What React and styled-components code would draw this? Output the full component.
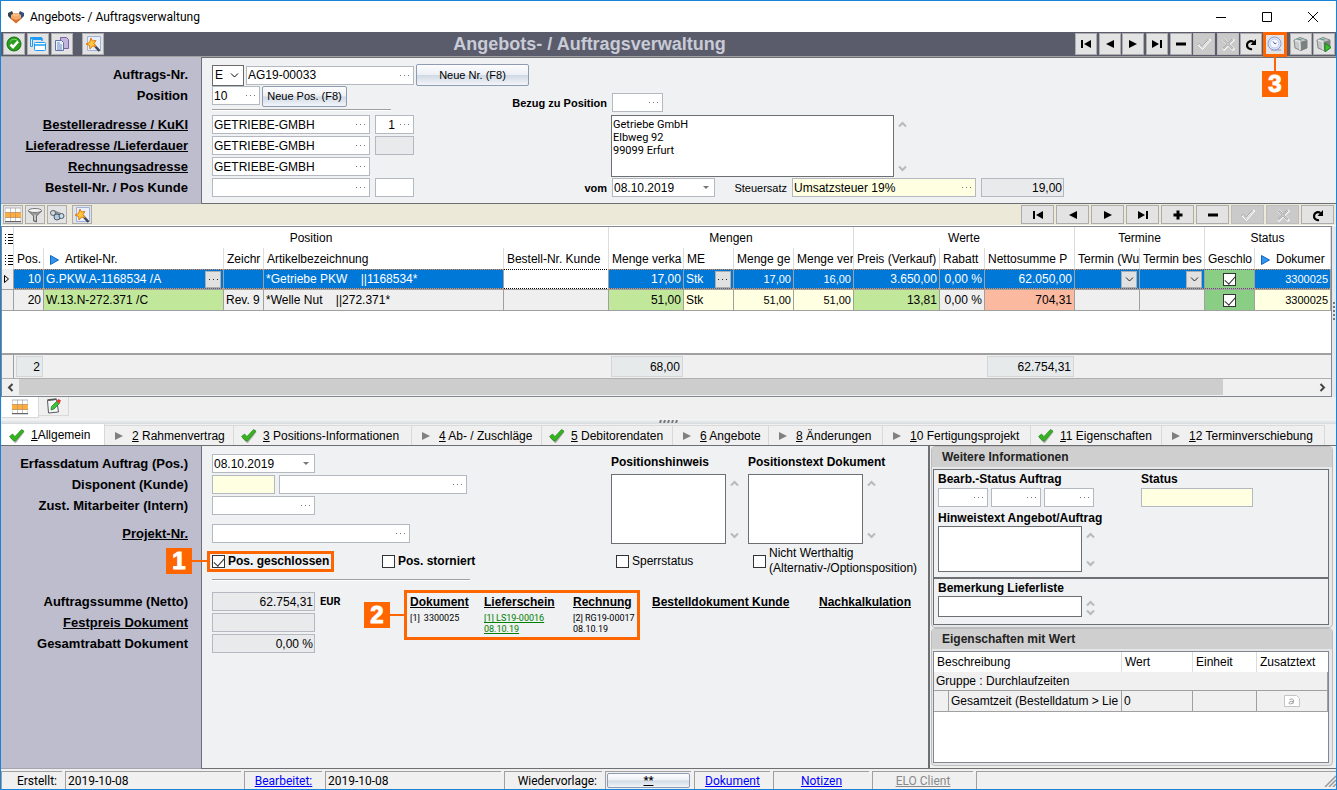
import React from "react";
import styled, { createGlobalStyle, css } from "styled-components";

const sans = `"Liberation Sans", Arial, sans-serif`;
const ui = `Roboto, "Segoe UI", sans-serif`;
const orange = "#ff6600";
const line = "#6e6f73";

const Global = createGlobalStyle`
  * { box-sizing: border-box; }
  body { margin: 0; background: #f0f0f0; font: 12px/15px ${sans}; color: #000; }
  button, input, select, textarea { font: inherit; color: inherit; margin: 0; border-radius: 0; }
  svg { display: block; flex: none; }
`;

/* ---------- window frame ---------- */
const Window = styled.div`
  min-height: 100vh;
  display: flex;
  flex-direction: column;
  border: 1px solid #1883d7;
  background: #f0f0f0;
`;
const TitleBar = styled.header`
  display: flex;
  align-items: center;
  height: 31px;
  padding-left: 7px;
  background: #fff;
  font: 12px/16px ${ui};
`;
const WindowTitle = styled.span`
  flex: 1;
  padding-left: 6px;
`;
const WindowButton = styled.button`
  width: 46px;
  height: 29px;
  display: flex;
  align-items: center;
  justify-content: center;
  padding: 0;
  border: 0;
  background: none;
`;

/* ---------- toolbars ---------- */
const Toolbar = styled.div`
  display: flex;
  align-items: center;
  height: 25px;
  padding: 0 1px 1px 2px;
  background: #5a5c6c;
  border-bottom: 1px solid #a0a0a0;
`;
const GridToolbar = styled.div`
  display: flex;
  justify-content: space-between;
  align-items: center;
  height: 22px;
  padding: 0 2px;
  background: #ece9d8;
  border-bottom: 1px solid #fff;
`;
const ToolGroup = styled.div`
  display: flex;
  gap: ${(p) => p.$gap || 2}px;
  ${(p) => p.$width && `width: ${p.$width}px; justify-content: space-between; gap: 0;`}
  margin-left: ${(p) => p.$push || 0}px;
`;
const ToolButton = styled.button`
  position: relative;
  display: flex;
  align-items: center;
  justify-content: center;
  width: ${(p) => p.$w || 22}px;
  height: ${(p) => p.$h || 22}px;
  padding: 0;
  color: #000;
  background: ${(p) => (p.disabled ? "#cacaca" : "#e3e3e3")};
  border: 1px solid ${(p) => (p.disabled ? "#bdbdbd" : "#adadad")};
`;
const ToolbarTitle = styled.h1`
  flex: 1;
  margin: 0;
  text-align: center;
  font-size: 18px;
  line-height: 22px;
  color: #c9cbd6;
`;

/* ---------- callouts ---------- */
const frame = css`
  position: absolute;
  border: 3px solid ${orange};
  pointer-events: none;
`;
const CalloutBadge = styled.span`
  position: absolute;
  z-index: 2;
  width: 26px;
  height: 26px;
  background: ${orange};
  color: #fff;
  font: bold 24px/26px ${sans};
  -webkit-text-stroke: 1px #fff;
  text-align: center;
  ${(p) =>
    p.$below
      ? css`top: calc(100% + 17px); left: calc(50% - 13px);`
      : css`right: calc(100% + ${p.$gap}px); top: calc(50% - 13px);`}
  &::after {
    content: "";
    position: absolute;
    background: ${orange};
    ${(p) =>
      p.$below
        ? css`width: 2px; height: 16px; left: 12px; bottom: 100%;`
        : css`height: 2px; width: 16px; top: 12px; left: 100%;`}
  }
`;
const ToolHighlight = styled.span`
  ${frame}
  inset: -2px -2px -3px;
`;

/* ---------- form parts ---------- */
const Pane = styled.section`
  display: flex;
  ${(p) => p.$grow && "flex: 1;"}
`;
const LabelColumn = styled.div`
  flex: none;
  width: 200px;
  display: flex;
  flex-direction: column;
  align-items: flex-end;
  gap: 2px;
  padding: ${(p) => p.$top}px 13px 5px 0;
  background: #bdbdce;
  border-bottom: 1px solid #a4a5b0;
`;
const RowLabel = styled.label`
  height: 19px;
  margin-top: ${(p) => p.$space || 0}px;
  font: bold 13px/19px ${sans};
  white-space: nowrap;
  text-decoration: ${(p) => (p.$link ? "underline" : "none")};
`;
const PaneBody = styled.div`
  flex: 1;
  min-width: 0;
  padding: ${(p) => p.$top}px 0 6px 10px;
  background: #eff1f3;
  border-left: 1px solid ${line};
  border-bottom: 1px solid ${line};
  ${(p) => p.$topLine && `border-top: 1px solid ${line};`}
`;
const Line = styled.div`
  display: flex;
  align-items: ${(p) => p.$align || "center"};
  gap: ${(p) => p.$gap || 0}px;
  margin-top: ${(p) => p.$space || 0}px;
`;
const Stack = styled.div`
  display: flex;
  flex-direction: column;
  gap: ${(p) => (p.$gap === undefined ? 2 : p.$gap)}px;
  ${(p) => p.$width && `width: ${p.$width}px; flex: none;`}
  padding-top: ${(p) => p.$top || 0}px;
`;
const Box = styled.span`
  display: flex;
  flex: none;
  align-items: center;
  width: ${(p) => p.$w}px;
  height: 19px;
  border: 1px solid #b4b8c1;
  background: ${(p) => (p.$tone === "yellow" ? "#ffffe1" : p.$tone === "grey" ? "#e9eaec" : "#fff")};
`;
const TextInput = styled.input`
  flex: 1;
  min-width: 0;
  width: 100%;
  height: 17px;
  padding: 0 1px;
  border: 0;
  outline: 0;
  background: transparent;
  text-align: ${(p) => (p.$right ? "right" : "left")};
`;
const MoreButton = styled.button`
  display: flex;
  align-items: center;
  justify-content: center;
  width: 17px;
  height: 17px;
  flex: none;
  padding: 0;
  border: 0;
  background: none;
  color: #777;
`;
const PushButton = styled.button`
  flex: none;
  width: ${(p) => p.$w}px;
  height: ${(p) => p.$h || 21}px;
  padding: 0;
  font-size: 11px;
  line-height: 13px;
  white-space: nowrap;
  border: 1px solid #8e9bb0;
  border-radius: 2px;
  background: linear-gradient(#fdfdfe, #eceff4 48%, #d0d9e4 52%, #f2f5f9);
  ${(p) => p.$underline && "text-decoration: underline; font-weight: bold;"}
`;
const Combo = styled.span`
  position: relative;
  display: flex;
  align-items: center;
  width: 32px;
  height: 21px;
  border: 1px solid #6b6b6b;
  background: #fff;
  svg { position: absolute; right: 3px; pointer-events: none; }
`;
const Select = styled.select`
  appearance: none;
  width: 100%;
  height: 19px;
  padding: 0 2px;
  border: 0;
  outline: 0;
  background: transparent;
`;
const Rule = styled.hr`
  width: ${(p) => p.$w}px;
  height: 2px;
  margin: ${(p) => p.$m};
  border: 0;
  border-top: 1px solid #a0a0a0;
  background: #fff;
`;
const SmallLabel = styled.label`
  height: 16px;
  font: bold 12px/16px ${sans};
  white-space: nowrap;
`;
const SideLabel = styled.label`
  width: ${(p) => p.$w}px;
  flex: none;
  padding-right: 5px;
  text-align: right;
  font: ${(p) => (p.$plain ? "normal" : "bold")} 11px/16px ${sans};
  white-space: nowrap;
`;
const MemoWrap = styled.div`
  display: flex;
  height: ${(p) => p.$h}px;
`;
const MemoArea = styled.textarea`
  width: ${(p) => p.$w}px;
  height: 100%;
  padding: 2px 1px 1px;
  border: 1px solid ${line};
  outline: 0;
  resize: none;
  overflow: hidden;
  background: #fff;
  font: 11px/13px ${ui};
`;
const MemoArrows = styled.div`
  display: flex;
  flex-direction: column;
  justify-content: space-between;
  padding: ${(p) => (p.$tight ? 3 : 5)}px 4px ${(p) => (p.$tight ? 0 : 4)}px;
  color: #b9b9b9;
`;
const CheckLabel = styled.label`
  position: relative;
  display: flex;
  justify-self: start;
  align-items: center;
  gap: 3px;
  min-height: 15px;
  white-space: nowrap;
  font-weight: ${(p) => (p.$bold ? "bold" : "normal")};
`;
const CheckFrame = styled.span`
  ${frame}
  inset: -3px -5px;
`;
const Check = styled.input`
  appearance: none;
  flex: none;
  position: relative;
  width: 13px;
  height: 13px;
  border: 1px solid #333;
  background: #fff;
  &:checked::after {
    content: "";
    position: absolute;
    left: 3px;
    top: 0;
    width: 5px;
    height: 9px;
    border: solid #333;
    border-width: 0 1px 1px 0;
    transform: rotate(42deg);
  }
`;
const CheckRow = styled.div`
  display: grid;
  grid-template-columns: 170px 234px 137px auto;
  align-items: center;
  height: 34px;
`;
const Unit = styled.b`
  font: bold 11px/16px ${ui};
  padding-left: 5px;
`;

/* ---------- documents ---------- */
const DocFrame = styled.div`
  position: relative;
  display: grid;
  grid-template-columns: 74px 89px auto;
  width: 236px;
  height: 50px;
  padding: 1px 0 0 3px;
  border: 3px solid ${orange};
`;
const DocCell = styled.div`
  font: 9px/11px ${ui};
  white-space: nowrap;
  ${(p) => p.$w && `width: ${p.$w}px;`}
  padding-top: ${(p) => p.$top || 0}px;
`;
const DocHead = styled.a`
  display: block;
  margin-bottom: 3px;
  font: bold 12px/16px ${sans};
  color: #000;
`;
const DocLink = styled.a`
  color: #008000;
`;
const DocNo = styled.span`
  padding-left: 4px;
`;

/* ---------- position grid ---------- */
const GridArea = styled.div`
  display: flex;
`;
const GridFrame = styled.div`
  flex: 1;
  min-width: 0;
  border: 1px solid #828790;
  background: #fff;
`;
const SideGrip = styled.div`
  width: 4px;
  display: flex;
  align-items: center;
  background: #e6e9ec;
  color: #777;
`;
const Table = styled.table`
  width: 100%;
  table-layout: fixed;
  border-collapse: separate;
  border-spacing: 0;
`;
const Th = styled.th`
  height: 21px;
  padding: 2px 0 0 ${(p) => (p.$center ? 0 : 3)}px;
  overflow: hidden;
  white-space: nowrap;
  font-weight: normal;
  text-align: ${(p) => (p.$center ? "center" : "left")};
  border-right: 1px solid #dcdcdc;
  svg { display: inline-block; vertical-align: middle; }
`;
const ArrowLabel = styled.span`
  display: flex;
  align-items: center;
  gap: 6px;
  padding-left: 3px;
`;
const toneOf = { sel: "#0078d7", green: "#c0e79a", ok: "#8ace85", yellow: "#ffffe1", red: "#fbb9a0", white: "#fff", grey: "#efefef" };
const dots = (c) => `repeating-linear-gradient(90deg, ${c} 0 1px, transparent 1px 2px)`;
const Td = styled.td`
  height: 21px;
  padding: 0 2px;
  overflow: hidden;
  white-space: pre;
  text-align: ${(p) => (p.$right ? "right" : "left")};
  font-size: ${(p) => (p.$small ? 11 : 12)}px;
  color: ${(p) => (p.$tone === "sel" ? "#fff" : "#000")};
  border-right: 1px solid #a0a0a0;
  border-bottom: 1px solid #a0a0a0;
  background-color: ${(p) => toneOf[p.$tone || "grey"]};
  ${(p) =>
    p.$dots &&
    css`
      background-image: ${dots(p.$dots)}, ${dots(p.$dots)};
      background-size: 100% 1px;
      background-position: top, bottom;
      background-repeat: no-repeat;
    `}
`;
const CellSplit = styled.span`
  display: flex;
  align-items: center;
  justify-content: ${(p) => p.$justify || "space-between"};
`;
const CellButton = styled.button`
  width: 16px;
  height: 17px;
  display: flex;
  align-items: center;
  justify-content: center;
  padding: 0;
  color: #222;
  background: #e1e1e1;
  border: 1px solid #adadad;
`;
const FillCell = styled.td`
  height: 44px;
  padding: 0;
  border-bottom: 2px solid #a0a0a0;
`;
const SumCell = styled.td`
  height: 24px;
  padding: 1px 1px 1px 2px;
  background: #f0f0f0;
  border-bottom: 1px solid #b0b0b0;
  ${(p) => p.$edge && "border-right: 1px solid #a0a0a0;"}
`;
const Sum = styled.output`
  display: block;
  height: 21px;
  padding-right: 2px;
  line-height: 20px;
  text-align: right;
  background: #e6eaeb;
  border: 1px solid #d3d6d7;
`;
const HScroll = styled.div`
  display: flex;
  align-items: stretch;
  height: 17px;
  background: #f0f0f0;
  color: #444;
`;
const ScrollArrow = styled.span`
  width: 17px;
  display: flex;
  align-items: center;
  justify-content: center;
`;
const Thumb = styled.span`
  flex: 1204;
  margin-bottom: 1px;
  background: #cdcdcd;
`;
const ThumbRest = styled.span`
  flex: 91;
`;
const ViewTabs = styled.div`
  display: flex;
  height: 22px;
  padding-left: 1px;
`;
const ViewTab = styled.button`
  display: flex;
  align-items: center;
  justify-content: center;
  width: ${(p) => (p.$active ? 37 : 30)}px;
  height: ${(p) => (p.$active ? 21 : 19)}px;
  padding: 0;
  border: solid #d9d9d9;
  border-width: 0 1px 1px 0;
  background: ${(p) => (p.$active ? "#fff" : "#f0f0f0")};
`;
const Splitter = styled.div`
  display: flex;
  justify-content: center;
  height: 5px;
  padding-top: 1px;
  color: #777;
  background: linear-gradient(#f5f6f7, #d5dade);
`;

/* ---------- page tabs ---------- */
const Tabs = styled.nav`
  display: flex;
  align-items: flex-end;
  height: 22px;
  padding-left: 1px;
  border-bottom: 1px solid ${line};
`;
const Tab = styled.button`
  display: flex;
  align-items: center;
  flex: 0 1 ${(p) => p.$w}px;
  min-width: 0;
  gap: 6px;
  height: ${(p) => (p.$active ? 22 : 20)}px;
  padding: ${(p) => (p.$active ? 2 : 1)}px 0 0 7px;
  white-space: nowrap;
  border: solid #d9d9d9;
  border-width: 1px 1px 0 0;
  background: ${(p) => (p.$active ? "#fff" : "#f0f0f0")};
`;
const TabMark = styled.span`
  width: ${(p) => (p.$wide ? 16 : 14)}px;
  display: flex;
  justify-content: center;
`;

/* ---------- right side ---------- */
const Side = styled.aside`
  flex: none;
  width: 408px;
  display: flex;
  flex-direction: column;
  padding: 0 3px 2px 1px;
  background: #f0f0f0;
  border-left: 2px solid ${line};
  border-bottom: 1px solid ${line};
`;
const Group = styled.section`
  display: flex;
  flex-direction: column;
  ${(p) => p.$grow && "flex: 1;"}
  padding-bottom: 2px;
  border: 1px solid #bdbdbd;
  border-radius: 4px;
  background: #e6e7e8;
`;
const GroupTitle = styled.h2`
  height: 20px;
  margin: 0 0 2px;
  padding-left: 10px;
  font: bold 12px/20px ${sans};
  color: #222;
  background: #cfcfcf;
  border-radius: 3px 3px 0 0;
`;
const Panel = styled.div`
  margin: 0 3px 0 1px;
  height: ${(p) => p.$h}px;
  padding: 1px 4px;
  background: #eff1f3;
  border: 1px solid ${line};
`;
const StatusGrid = styled.div`
  display: grid;
  grid-template-columns: 203px 112px;
  row-gap: 1px;
  margin-bottom: 3px;
`;
const PropFrame = styled.div`
  flex: 1;
  margin: 0 3px 0 1px;
  background: #fff;
  border: 1px solid #828790;
`;
const PropTh = styled.th`
  height: 20px;
  padding: 0 0 0 3px;
  text-align: left;
  font-weight: normal;
  border-right: 1px solid #dcdcdc;
  &:last-child { border-right: 0; }
`;
const PropTd = styled.td`
  height: ${(p) => (p.$group ? 19 : 21)}px;
  padding: 0 2px;
  overflow: hidden;
  white-space: nowrap;
  background: #f0f0f0;
  border: solid #a0a0a0;
  border-width: 0 1px 1px 0;
`;

/* ---------- status bar ---------- */
const StatusBar = styled.footer`
  display: flex;
  gap: 3px;
  height: 20px;
  padding-top: 2px;
  font: 12px/16px ${ui};
`;
const StatusCell = styled.div`
  ${(p) => (p.$w ? `flex: 0 0 ${p.$w}px;` : "flex: 1;")}
  display: flex;
  align-items: center;
  justify-content: ${(p) => p.$justify || "center"};
  padding: 0 ${(p) => p.$pad || 0}px;
  border: 1px solid #a0a0a0;
  border-width: 1px 0 0 1px;
`;
const StatusLink = styled.a`
  color: ${(p) => (p.$dim ? "#8a8a8a" : "#0000ff")};
`;

/* ---------- drawings ---------- */
const Svg = ({ w = 16, h, children, ...rest }) => (
  <svg width={w} height={h || w} viewBox={`0 0 ${w} ${h || w}`} fill="none" aria-hidden="true" {...rest}>{children}</svg>
);
const Handshake = () => (
  <Svg>
    <path d="M0 4l4-2 2 4-3 4-3-3z" fill="#34424f" /><path d="M16 4l-4-2-2 4 3 4 3-3z" fill="#2f4f80" />
    <path d="M3 6l3-2h4l3 2v4l-5 4-5-4z" fill="#f6ab6c" /><path d="M3 9l5 2 5-2v1l-5 4.500L3 10z" fill="#d8702a" />
    <path d="M5 5.500l3 1 3-1" stroke="#ffd0a0" />
  </Svg>
);
const OkIcon = () => (
  <Svg><circle cx="8" cy="8" r="7" fill="#2a9c1d" stroke="#15700f" /><path d="M4 5.500A5 5 0 0 1 12 5" stroke="#7fd66e" /><path d="M4.500 8.500l2.500 2.500 5-5.500" stroke="#fff" strokeWidth="2.600" /></Svg>
);
const WindowsIcon = () => (
  <Svg><path d="M.5 1.500h11v2h-9v7h-2z" fill="#e6f2fb" stroke="#1e9bf5" /><path d="M1 2.500h11M12 2v3" stroke="#1e9bf5" strokeWidth="1.500" /><rect x="4.500" y="6.500" width="11" height="8" rx="1" fill="#fff" stroke="#1e9bf5" /><path d="M5 9h10" stroke="#1e9bf5" strokeWidth="1.500" /></Svg>
);
const CopyIcon = () => (
  <Svg><path d="M6.500 1.500h6l2 2v9h-8z" fill="#c3b6dd" stroke="#7a62a6" /><path d="M1.500 4.500h6l2 2v8h-8z" fill="#eef2fb" stroke="#5f74a8" /><path d="M3 7h3M3 9h5M3 11h5M3 13h5" stroke="#6f88bd" /></Svg>
);
const WandIcon = () => (
  <Svg><path d="M2.500.5h13v14h-13z" fill="#e8effc" stroke="#a0b2d8" /><path d="M9 9l5.500 6" stroke="#3c4658" strokeWidth="2.500" /><path d="M6 2l1.500 3L11 4.500 9 7.500l2 3-3.500-.5L5 13l-.5-3.500L1 8l3.500-1.500z" fill="#ffc83c" stroke="#e07c14" /></Svg>
);
const FirstIcon = () => <Svg><path d="M4 4v8" stroke="#000" strokeWidth="2" /><path d="M13 4v8L6 8z" fill="#000" /></Svg>;
const PrevIcon = () => <Svg><path d="M12 4v8L4 8z" fill="#000" /></Svg>;
const NextIcon = () => <Svg><path d="M4 4v8l8-4z" fill="#000" /></Svg>;
const LastIcon = () => <Svg><path d="M12 4v8" stroke="#000" strokeWidth="2" /><path d="M3 4v8l7-4z" fill="#000" /></Svg>;
const MinusIcon = () => <Svg><path d="M3 8h10" stroke="#000" strokeWidth="3" /></Svg>;
const PlusIcon = () => <Svg><path d="M3.500 8h9M8 3.500v9" stroke="#000" strokeWidth="3" /></Svg>;
const TickIcon = () => <Svg><path d="M2 9l2-1 2.500 3L13 3l2 1-8.500 9.500z" fill="#d4d4d4" stroke="#fff" /><path d="M1.500 8.500l2-1 2.500 3L12.500 3" stroke="#a2a2a2" /></Svg>;
const CrossIcon = () => <Svg><path d="M3 3l11 11M14 3L3 14" stroke="#fff" strokeWidth="3" /><path d="M3 3l10 10M13 3L3 13" stroke="#a8a8a8" strokeWidth="2" /><path d="M3 3l10 10M13 3L3 13" stroke="#cacaca" strokeWidth="1" /></Svg>;
const RefreshIcon = () => <Svg><path d="M9 13A4 4 0 1 1 10.500 6" stroke="#000" strokeWidth="2.200" /><path d="M13 3v6H7.500z" fill="#000" /></Svg>;
const ClockIcon = () => <Svg><path d="M5 13h9v2H4z" fill="#b5bbd8" /><circle cx="7.500" cy="7.500" r="6.500" fill="#e4e9fb" stroke="#8c9ad4" /><circle cx="7.500" cy="7.500" r="4.500" fill="#f6f8ff" stroke="#bcc6ec" /><path d="M6 5.500l2 2.500 1.500-1" stroke="#5060a0" /></Svg>;
const CubeIcon = ({ play }) => (
  <Svg><path d="M1 4l6-2.500L14 4v8l-6 2.500L2 12z" fill="#c4c8c8" stroke="#858989" /><path d="M7 6l7-2v8l-6 2.500z" fill="#7b8080" /><path d="M2 4l5 2v8" stroke="#f4f4f4" /><path d="M4 3l5 1" stroke="#5aa08e" />
    {play && <path d="M9 7l6 4.500L9 16z" fill="#3cc02f" stroke="#1d7d18" />}</Svg>
);
const TableIcon = () => (
  <Svg><path d="M0 1h16v14H0z" fill="#fff" stroke="#b0b4ba" /><path d="M0 5h16v6H0z" fill="#ffae3d" /><path d="M5.500 1v14M10.500 1v14M0 5.500h16M0 10.500h16" stroke="#9b9489" strokeOpacity=".55" /><path d="M0 14.500h16" stroke="#666" /></Svg>
);
const FunnelIcon = () => <Svg><path d="M1.500 4L6.500 9v5l3 1V9l5-5z" fill="#9c9c9c" stroke="#6a6a6a" /><ellipse cx="8" cy="3.500" rx="6.500" ry="2" fill="#f4f4f4" stroke="#777" /><path d="M8 8v5" stroke="#eee" /></Svg>;
const BinocularIcon = () => <Svg><path d="M1 5l4-2 7 3 2 5-5 2z" fill="#8d959c" /><circle cx="4" cy="6" r="2.500" fill="#d5d9dc" stroke="#60686e" /><circle cx="8" cy="10" r="3" fill="#b4cde2" stroke="#4d5a66" /><circle cx="12.500" cy="9" r="2.500" fill="#c8dcec" stroke="#4d5a66" /></Svg>;
const NoteIcon = () => <Svg><path d="M1.500 2.500l9-1 2 12.500-10 1z" fill="#f7f8f8" stroke="#555c60" /><path d="M1.500 2l9-1" stroke="#555" strokeWidth="1.500" /><path d="M5 12l.5-3.500 5-5 3 2L8 11z" fill="#3fc03b" stroke="#187a1c" strokeWidth=".7" /><path d="M10.500 3l2-2 2.500 1.500-1.500 3z" fill="#e23b2e" /></Svg>;
const GreenTick = () => <Svg><path d="M1 9l3-2.500 2.500 2.500 6.500-7 2.500 1-8.500 11H6z" fill="#6d6d6d" fillOpacity=".5" transform="translate(0 1)" /><path d="M.5 8.500l3-2.500L6 8.500l6.500-7L15 3 6.500 13H5z" fill="#35b41f" stroke="#178011" strokeWidth=".6" /></Svg>;
const GreyArrow = () => <Svg w={8}><path d="M0 0v8l8-4z" fill="#808080" /></Svg>;
const BlueArrow = () => <Svg w={9} h={10}><path d="M.5.5v9l8-4.500z" fill="#2f95f0" stroke="#1465bd" /></Svg>;
const Chevron = ({ dir = "down", w = 9, sw = 1 }) => {
  const r = { down: 0, up: 180, left: 90, right: -90 }[dir];
  return <Svg w={w}><path d={`M${w / 2 - 3.5} ${w / 2 - 2}l3.500 3.500 3.500-3.500`} stroke="currentColor" strokeWidth={sw} transform={`rotate(${r} ${w / 2} ${w / 2})`} /></Svg>;
};
const Ellipsis = () => <Svg w={9} h={1}><path d="M0 0h1v1H0zM4 0h1v1H4zM8 0h1v1H8z" fill="currentColor" /></Svg>;
const DropArrow = () => <Svg w={6} h={3}><path d="M0 0h6L3 3z" fill="currentColor" /></Svg>;
const ListIcon = () => <Svg w={8} h={10}><path d="M0 .5h2M0 3.500h2M0 6.500h2M0 9.500h2" stroke="#000" strokeDasharray="1 1" /><path d="M3 .5h5M3 3.500h5M3 6.500h5M3 9.500h5" stroke="#000" /></Svg>;
const RowMarker = () => <Svg w={5} h={8}><path d="M.5.5v7l4-3.500z" stroke="#000" /></Svg>;
const SheetIcon = () => <Svg><path d="M.5 2.500h12l3 3v8H.5z" fill="#fff" stroke="#c4c4c4" /><path d="M5.500 6.500c2-1 4.500-.5 4 1.500l-.8 3M9.300 8.500c-3-.5-4.500.5-4.300 1.800.3 1.200 3 .8 3.800-.8" stroke="#9c9c9c" /></Svg>;
const DotRow = () => <Svg w={19} h={3}><path d="M1 3L2 0M5 3L6 0M9 3l1-3M13 3l1-3M17 3l1-3" stroke="currentColor" strokeWidth="2" /></Svg>;
const DotColumn = () => <Svg w={4} h={19}><path d="M1 1h2M1 5h2M1 9h2M1 13h2M1 17h2" stroke="currentColor" strokeWidth="2" /></Svg>;
const ResizeGrip = () => <Svg w={12}><path d="M1 12L12 1M5 12l7-7M9 12l3-3" stroke="#999" strokeWidth="1.500" /></Svg>;

/* ---------- composed controls ---------- */
const Field = ({ id, w, value = "", tone, right, more, drop, label }) => (
  <Box $w={w} $tone={tone}>
    <TextInput id={id} aria-label={label} defaultValue={value} $right={right} readOnly={tone === "grey"} />
    {more && <MoreButton aria-label="Auswahl"><Ellipsis /></MoreButton>}
    {drop && <MoreButton aria-label="Kalender"><DropArrow /></MoreButton>}
  </Box>
);
const Memo = ({ id, w, h, value = "", tight, label }) => (
  <MemoWrap $h={h}>
    <MemoArea id={id} $w={w} defaultValue={value} aria-label={label} />
    <MemoArrows $tight={tight}><Chevron dir="up" sw={2} /><Chevron sw={2} /></MemoArrows>
  </MemoWrap>
);
const Tool = ({ icon, label, ...rest }) => <ToolButton aria-label={label} {...rest}>{icon}</ToolButton>;

const colWidths = [12, 30, 180, 40, null, 105, 75, 50, 60, 60, 86, 45, 90, 65, 65, 50, 76];
const tabs = [
  ["1", "Allgemein", 103, true], ["2", " Rahmenvertrag", 129], ["3", " Positions-Informationen", 178, true],
  ["4", " Ab- / Zuschläge", 130], ["5", " Debitorendaten", 131, true], ["6", " Angebote", 96], ["8", " Änderungen", 114],
  ["1", "0 Fertigungsprojekt", 148], ["1", "1 Eigenschaften", 131, true], ["1", "2 Terminverschiebung", 163],
];
const mark = "#ff8c3c";

export default function App() {
  return (
    <Window>
      <Global />
      <TitleBar>
        <Handshake />
        <WindowTitle>Angebots- / Auftragsverwaltung</WindowTitle>
        <WindowButton aria-label="Minimieren"><Svg w={10}><path d="M0 5.500h10" stroke="#000" /></Svg></WindowButton>
        <WindowButton aria-label="Maximieren"><Svg w={10}><path d="M.5.5h9v9h-9z" stroke="#000" /></Svg></WindowButton>
        <WindowButton aria-label="Schließen"><Svg w={10}><path d="M0 0l10 10M10 0L0 10" stroke="#000" /></Svg></WindowButton>
      </TitleBar>

      <Toolbar>
        <ToolGroup>
          <Tool label="OK" icon={<OkIcon />} />
          <Tool label="Fenster" icon={<WindowsIcon />} />
          <Tool label="Kopieren" icon={<CopyIcon />} />
        </ToolGroup>
        <ToolGroup $push={9}><Tool label="Assistent" icon={<WandIcon />} /></ToolGroup>
        <ToolbarTitle>Angebots- / Auftragsverwaltung</ToolbarTitle>
        <ToolGroup $width={211}>
          <Tool label="Erster" icon={<FirstIcon />} />
          <Tool label="Zurück" icon={<PrevIcon />} />
          <Tool label="Weiter" icon={<NextIcon />} />
          <Tool label="Letzter" icon={<LastIcon />} />
          <Tool label="Löschen" icon={<MinusIcon />} />
          <Tool label="Speichern" disabled icon={<TickIcon />} />
          <Tool label="Abbrechen" disabled icon={<CrossIcon />} />
          <Tool label="Aktualisieren" icon={<RefreshIcon />} />
          <ToolButton aria-label="Historie">
            <ClockIcon />
            <ToolHighlight />
            <CalloutBadge $below>3</CalloutBadge>
          </ToolButton>
        </ToolGroup>
        <ToolGroup $push={4} $gap={1}>
          <Tool label="Artikel" icon={<CubeIcon />} />
          <Tool label="Artikel starten" icon={<CubeIcon play />} />
        </ToolGroup>
      </Toolbar>

      <Pane>
        <LabelColumn $top={8}>
          <RowLabel htmlFor="auftrag">Auftrags-Nr.</RowLabel>
          <RowLabel htmlFor="position">Position</RowLabel>
          <RowLabel $space={8} $link htmlFor="besteller">Bestelleradresse / KuKI</RowLabel>
          <RowLabel $link htmlFor="liefer">Lieferadresse /Lieferdauer</RowLabel>
          <RowLabel $link htmlFor="rechnung">Rechnungsadresse</RowLabel>
          <RowLabel htmlFor="bestellnr">Bestell-Nr. / Pos Kunde</RowLabel>
        </LabelColumn>
        <PaneBody $top={6} $topLine>
          <Line $gap={2}>
            <Combo><Select aria-label="Auftragsart"><option>E</option></Select><Chevron w={11} /></Combo>
            <Field id="auftrag" w={168} value="AG19-00033" more />
            <PushButton $w={113} $h={22}>Neue Nr. (F8)</PushButton>
          </Line>
          <Line $align="flex-start">
            <Stack $width={202}>
              <Line $gap={2} $align="flex-start">
                <Field id="position" w={48} value="10" more />
                <PushButton $w={85}>Neue Pos. (F8)</PushButton>
              </Line>
              <Rule $w={179} $m="0 0 2px" />
              <Line $gap={5}><Field id="besteller" w={158} value="GETRIEBE-GMBH" more /><Field label="KuKI" w={39} value="1" right more /></Line>
              <Line $gap={5}><Field id="liefer" w={158} value="GETRIEBE-GMBH" more /><Field label="Lieferdauer" w={39} tone="grey" /></Line>
              <Field id="rechnung" w={158} value="GETRIEBE-GMBH" more />
              <Line $gap={5}><Field id="bestellnr" w={158} more /><Field label="Pos Kunde" w={39} /></Line>
            </Stack>
            <Stack $top={7} $gap={1}>
              <Line><SideLabel $w={198} htmlFor="bezug">Bezug zu Position</SideLabel><Field id="bezug" w={51} more /></Line>
              <Line $space={2}><SideLabel $w={197} as="span" /><Memo label="Adresse" w={283} h={62} value={"Getriebe GmbH\nElbweg 92\n99099 Erfurt"} /></Line>
              <Line>
                <SideLabel $w={198} htmlFor="vom">vom</SideLabel>
                <Field id="vom" w={103} value="08.10.2019" drop />
                <SideLabel $w={77} $plain htmlFor="steuer">Steuersatz</SideLabel>
                <Line $gap={5}><Field id="steuer" w={184} tone="yellow" value="Umsatzsteuer 19%" more /><Field label="Steuersatz Wert" w={83} tone="grey" value="19,00" right /></Line>
              </Line>
            </Stack>
          </Line>
        </PaneBody>
      </Pane>

      <GridToolbar>
        <Line $gap={5}>
          <ToolGroup>
            <Tool $w={20} $h={19} label="Tabelle" icon={<TableIcon />} />
            <Tool $w={20} $h={19} label="Filter" icon={<FunnelIcon />} />
            <Tool $w={20} $h={19} label="Suchen" icon={<BinocularIcon />} />
          </ToolGroup>
          <Tool $w={20} $h={19} label="Assistent" icon={<WandIcon />} />
        </Line>
        <ToolGroup>
          <Tool $w={33} $h={19} label="Erster" icon={<FirstIcon />} />
          <Tool $w={33} $h={19} label="Zurück" icon={<PrevIcon />} />
          <Tool $w={33} $h={19} label="Weiter" icon={<NextIcon />} />
          <Tool $w={33} $h={19} label="Letzter" icon={<LastIcon />} />
          <Tool $w={33} $h={19} label="Neu" icon={<PlusIcon />} />
          <Tool $w={33} $h={19} label="Löschen" icon={<MinusIcon />} />
          <Tool $w={33} $h={19} label="Speichern" disabled icon={<TickIcon />} />
          <Tool $w={33} $h={19} label="Abbrechen" disabled icon={<CrossIcon />} />
          <Tool $w={33} $h={19} label="Aktualisieren" icon={<RefreshIcon />} />
        </ToolGroup>
      </GridToolbar>

      <GridArea>
        <GridFrame>
          <Table>
            <colgroup>{colWidths.map((w, i) => <col key={i} width={w || undefined} />)}</colgroup>
            <thead>
              <tr>
                <Th><ListIcon /></Th>
                <Th $center colSpan={5}>Position</Th>
                <Th $center colSpan={4}>Mengen</Th>
                <Th $center colSpan={3}>Werte</Th>
                <Th $center colSpan={2}>Termine</Th>
                <Th $center colSpan={2}>Status</Th>
              </tr>
              <tr>
                <Th><ListIcon /></Th>
                <Th>Pos.</Th>
                <Th><ArrowLabel><BlueArrow />Artikel-Nr.</ArrowLabel></Th>
                <Th>Zeichr</Th>
                <Th>Artikelbezeichnung</Th>
                <Th>Bestell-Nr. Kunde</Th>
                <Th>Menge verka</Th>
                <Th>ME</Th>
                <Th>Menge ge</Th>
                <Th>Menge ver</Th>
                <Th>Preis (Verkauf)</Th>
                <Th>Rabatt</Th>
                <Th>Nettosumme P</Th>
                <Th>Termin (Wu</Th>
                <Th>Termin bes</Th>
                <Th>Geschlo</Th>
                <Th><ArrowLabel><BlueArrow />Dokumer</ArrowLabel></Th>
              </tr>
            </thead>
            <tbody>
              <tr>
                <Td><RowMarker /></Td>
                <Td $tone="sel" $dots={mark} $right>10</Td>
                <Td $tone="sel" $dots={mark}><CellSplit>G.PKW.A-1168534 /A<CellButton aria-label="Auswahl"><Ellipsis /></CellButton></CellSplit></Td>
                <Td $tone="sel" $dots={mark} />
                <Td $tone="sel" $dots={mark}>{"*Getriebe PKW    ||1168534*"}</Td>
                <Td $tone="white" $dots="#000" />
                <Td $tone="sel" $dots={mark} $right>17,00</Td>
                <Td $tone="sel" $dots={mark}><CellSplit>Stk<CellButton aria-label="Auswahl"><Ellipsis /></CellButton></CellSplit></Td>
                <Td $tone="sel" $dots={mark} $right $small>17,00</Td>
                <Td $tone="sel" $dots={mark} $right $small>16,00</Td>
                <Td $tone="sel" $dots={mark} $right>3.650,00</Td>
                <Td $tone="sel" $dots={mark} $right>0,00 %</Td>
                <Td $tone="sel" $dots={mark} $right>62.050,00</Td>
                <Td $tone="sel" $dots={mark}><CellSplit $justify="flex-end"><CellButton aria-label="Datum"><Chevron /></CellButton></CellSplit></Td>
                <Td $tone="sel" $dots={mark}><CellSplit $justify="flex-end"><CellButton aria-label="Datum"><Chevron /></CellButton></CellSplit></Td>
                <Td $tone="ok" $dots="#7a3a8a"><CellSplit $justify="center"><Check type="checkbox" defaultChecked aria-label="Geschlossen 10" /></CellSplit></Td>
                <Td $tone="sel" $dots={mark} $right $small>3300025</Td>
              </tr>
              <tr>
                <Td />
                <Td $right>20</Td>
                <Td $tone="green">W.13.N-272.371 /C</Td>
                <Td>Rev. 9</Td>
                <Td>{"*Welle Nut    ||272.371*"}</Td>
                <Td />
                <Td $tone="green" $right>51,00</Td>
                <Td $tone="yellow">Stk</Td>
                <Td $tone="yellow" $right $small>51,00</Td>
                <Td $tone="yellow" $right $small>51,00</Td>
                <Td $tone="green" $right>13,81</Td>
                <Td $right>0,00 %</Td>
                <Td $tone="red" $right>704,31</Td>
                <Td />
                <Td />
                <Td $tone="ok"><CellSplit $justify="center"><Check type="checkbox" defaultChecked aria-label="Geschlossen 20" /></CellSplit></Td>
                <Td $tone="yellow" $right $small>3300025</Td>
              </tr>
              <tr><FillCell colSpan={17} /></tr>
            </tbody>
            <tfoot>
              <tr>
                <SumCell $edge />
                <SumCell><Sum>2</Sum></SumCell>
                <SumCell colSpan={4} />
                <SumCell><Sum>68,00</Sum></SumCell>
                <SumCell colSpan={5} />
                <SumCell><Sum>62.754,31</Sum></SumCell>
                <SumCell colSpan={4} />
              </tr>
            </tfoot>
          </Table>
          <HScroll>
            <ScrollArrow><Chevron dir="left" sw={2} /></ScrollArrow>
            <Thumb />
            <ThumbRest />
            <ScrollArrow><Chevron dir="right" sw={2} /></ScrollArrow>
          </HScroll>
        </GridFrame>
        <SideGrip><DotColumn /></SideGrip>
      </GridArea>
      <ViewTabs>
        <ViewTab $active aria-label="Tabelle"><TableIcon /></ViewTab>
        <ViewTab aria-label="Notiz"><NoteIcon /></ViewTab>
      </ViewTabs>
      <Splitter><DotRow /></Splitter>

      <Tabs>
        {tabs.map(([key, text, w, ok], i) => (
          <Tab key={i} $w={w} $active={i === 0}>
            <TabMark $wide={ok}>{ok ? <GreenTick /> : <GreyArrow />}</TabMark>
            <span><u>{key}</u>{text}</span>
          </Tab>
        ))}
      </Tabs>

      <Pane $grow>
        <LabelColumn $top={8}>
          <RowLabel htmlFor="erfass">Erfassdatum Auftrag (Pos.)</RowLabel>
          <RowLabel htmlFor="disponent">Disponent (Kunde)</RowLabel>
          <RowLabel htmlFor="mitarbeiter">Zust. Mitarbeiter (Intern)</RowLabel>
          <RowLabel $space={7} $link htmlFor="projekt">Projekt-Nr.</RowLabel>
          <RowLabel $space={47} htmlFor="summe">Auftragssumme (Netto)</RowLabel>
          <RowLabel $link htmlFor="festpreis">Festpreis Dokument</RowLabel>
          <RowLabel htmlFor="rabatt">Gesamtrabatt Dokument</RowLabel>
        </LabelColumn>
        <PaneBody $top={8}>
          <Line $align="flex-start">
            <Stack $width={399}>
              <Field id="erfass" w={103} value="08.10.2019" drop />
              <Line $gap={4}><Field id="disponent" w={63} tone="yellow" /><Field label="Disponent Name" w={188} more /></Line>
              <Field id="mitarbeiter" w={103} more />
              <Line $space={7}><Field id="projekt" w={198} more /></Line>
            </Stack>
            <Stack $width={137} $gap={4}>
              <SmallLabel htmlFor="hinweis">Positionshinweis</SmallLabel>
              <Memo id="hinweis" w={115} h={70} />
            </Stack>
            <Stack $width={137} $gap={4}>
              <SmallLabel htmlFor="postext">Positionstext Dokument</SmallLabel>
              <Memo id="postext" w={115} h={70} />
            </Stack>
          </Line>
          <CheckRow>
            <CheckLabel $bold>
              <Check type="checkbox" defaultChecked />Pos. geschlossen
              <CheckFrame />
              <CalloutBadge $gap={20}>1</CalloutBadge>
            </CheckLabel>
            <CheckLabel $bold><Check type="checkbox" />Pos. storniert</CheckLabel>
            <CheckLabel><Check type="checkbox" />Sperrstatus</CheckLabel>
            <CheckLabel><Check type="checkbox" /><span>Nicht Werthaltig<br />(Alternativ-/Optionsposition)</span></CheckLabel>
          </CheckRow>
          <Rule $w={258} $m="1px 0 9px" />
          <Line $align="flex-start">
            <Stack $width={192} $top={2}>
              <Line><Field id="summe" w={103} tone="grey" value="62.754,31" right /><Unit>EUR</Unit></Line>
              <Field id="festpreis" w={103} tone="grey" />
              <Field id="rabatt" w={103} tone="grey" value="0,00 %" right />
            </Stack>
            <DocFrame>
              <CalloutBadge $gap={17}>2</CalloutBadge>
              <DocCell><DocHead href="#dokument">Dokument</DocHead>[1]<DocNo>3300025</DocNo></DocCell>
              <DocCell><DocHead href="#lieferschein">Lieferschein</DocHead><DocLink href="#ls">[1] LS19-00016<br />08.10.19</DocLink></DocCell>
              <DocCell><DocHead href="#rechnung">Rechnung</DocHead>[2] RG19-00017<br />08.10.19</DocCell>
            </DocFrame>
            <Line $gap={12}>
              <span />
              <DocCell $w={155} $top={4}><DocHead href="#bestelldokument">Bestelldokument Kunde</DocHead></DocCell>
              <DocCell $top={4}><DocHead href="#nachkalkulation">Nachkalkulation</DocHead></DocCell>
            </Line>
          </Line>
        </PaneBody>
        <Side>
          <Group>
            <GroupTitle>Weitere Informationen</GroupTitle>
            <Panel $h={109}>
              <StatusGrid>
                <SmallLabel htmlFor="bearb">Bearb.-Status Auftrag</SmallLabel>
                <SmallLabel htmlFor="status">Status</SmallLabel>
                <Line $gap={3}><Field id="bearb" w={50} more /><Field label="Status 2" w={50} more /><Field label="Status 3" w={50} more /></Line>
                <Field id="status" w={112} tone="yellow" />
              </StatusGrid>
              <SmallLabel htmlFor="hinweistext">Hinweistext Angebot/Auftrag</SmallLabel>
              <Memo id="hinweistext" w={144} h={46} />
            </Panel>
            <Panel $h={47}>
              <SmallLabel htmlFor="bemerkung">Bemerkung Lieferliste</SmallLabel>
              <Memo id="bemerkung" w={144} h={21} tight />
            </Panel>
          </Group>
          <Group $grow>
            <GroupTitle>Eigenschaften mit Wert</GroupTitle>
            <PropFrame>
              <Table>
                <colgroup><col width={15} /><col /><col width={71} /><col width={64} /><col width={71} /></colgroup>
                <thead>
                  <tr><PropTh colSpan={2}>Beschreibung</PropTh><PropTh>Wert</PropTh><PropTh>Einheit</PropTh><PropTh>Zusatztext</PropTh></tr>
                </thead>
                <tbody>
                  <tr><PropTd $group colSpan={5}>Gruppe : Durchlaufzeiten</PropTd></tr>
                  <tr><PropTd /><PropTd>Gesamtzeit (Bestelldatum &gt; Lie</PropTd><PropTd>0</PropTd><PropTd /><PropTd><CellSplit $justify="center"><SheetIcon /></CellSplit></PropTd></tr>
                </tbody>
              </Table>
            </PropFrame>
          </Group>
        </Side>
      </Pane>

      <StatusBar>
        <StatusCell $w={61} $justify="flex-end" $pad={5}>Erstellt:</StatusCell>
        <StatusCell $w={176} $justify="flex-start" $pad={2}>2019-10-08</StatusCell>
        <StatusCell $w={78}><StatusLink href="#bearbeitet">Bearbeitet:</StatusLink></StatusCell>
        <StatusCell $w={176} $justify="flex-start" $pad={2}>2019-10-08</StatusCell>
        <StatusCell $w={98} $justify="flex-end" $pad={5}>Wiedervorlage:</StatusCell>
        <StatusCell $w={86}><PushButton $w={83} $h={15} $underline>**</PushButton></StatusCell>
        <StatusCell $w={76}><StatusLink href="#dok">Dokument</StatusLink></StatusCell>
        <StatusCell $w={96}><StatusLink href="#notizen">Notizen</StatusLink></StatusCell>
        <StatusCell $w={101}><StatusLink $dim href="#elo">ELO Client</StatusLink></StatusCell>
        <StatusCell $justify="flex-end"><ResizeGrip /></StatusCell>
      </StatusBar>
    </Window>
  );
}
